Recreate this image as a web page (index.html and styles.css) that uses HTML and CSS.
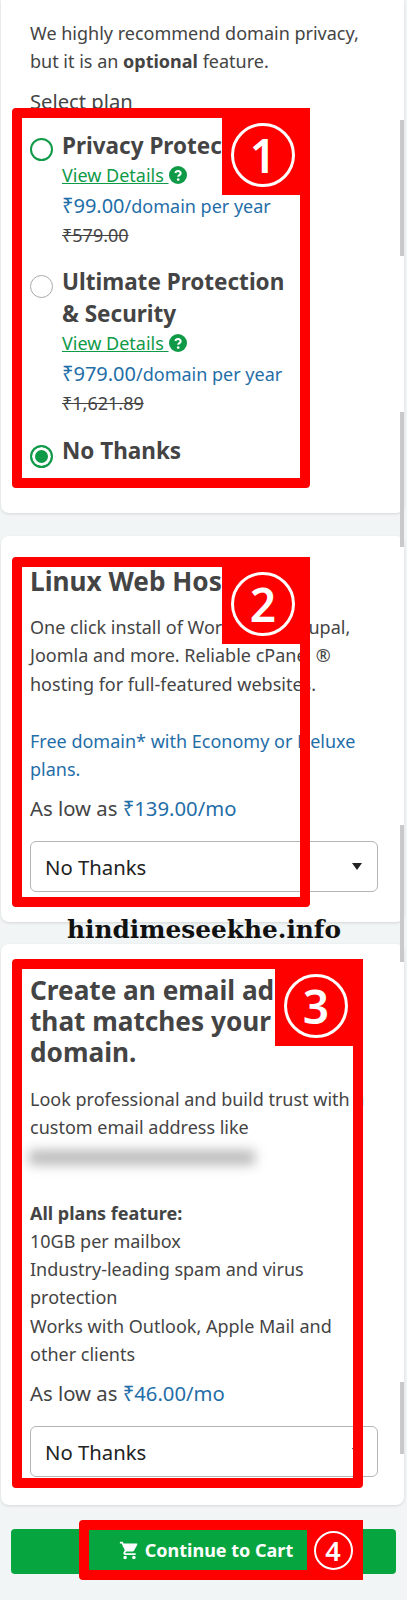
FILE: index.html
```html
<!DOCTYPE html>
<html lang="en">
<head>
    <meta charset="UTF-8">
    <meta name="viewport" content="width=device-width, initial-scale=1.0">
    <title>Domain add-ons</title>
    <link rel="stylesheet" href="styles.css">
</head>
<body>
    <div class="page">
        <section class="card card-privacy">
            <p class="intro">We highly recommend domain privacy, but it is an <strong>optional</strong> feature.</p>
            <div class="select-label">Select plan</div>

            <div class="plan plan-first">
                <span class="radio radio-ring"></span>
                <div class="plan-body">
                    <div class="plan-name">Privacy Protection</div>
                    <div class="plan-link"><a href="#">View Details </a><svg class="help" viewBox="0 0 18 18"><circle cx="9" cy="9" r="9" fill="#0f9a48"/><path d="M6.4 7a2.7 2.7 0 0 1 5.3.3c0 1.8-2.5 1.9-2.5 3.4" fill="none" stroke="#fff" stroke-width="2"/><circle cx="9.2" cy="13.6" r="1.3" fill="#fff"/></svg></div>
                    <div class="plan-price"><span class="amount">₹99.00</span>/domain per year</div>
                    <div class="plan-old">₹579.00</div>
                </div>
            </div>

            <div class="plan plan-second">
                <span class="radio"></span>
                <div class="plan-body">
                    <div class="plan-name">Ultimate Protection &amp; Security</div>
                    <div class="plan-link"><a href="#">View Details </a><svg class="help" viewBox="0 0 18 18"><circle cx="9" cy="9" r="9" fill="#0f9a48"/><path d="M6.4 7a2.7 2.7 0 0 1 5.3.3c0 1.8-2.5 1.9-2.5 3.4" fill="none" stroke="#fff" stroke-width="2"/><circle cx="9.2" cy="13.6" r="1.3" fill="#fff"/></svg></div>
                    <div class="plan-price"><span class="amount">₹979.00</span>/domain per year</div>
                    <div class="plan-old">₹1,621.89</div>
                </div>
            </div>

            <div class="plan plan-third">
                <span class="radio radio-on"></span>
                <div class="plan-body">
                    <div class="plan-name">No Thanks</div>
                </div>
            </div>
        </section>

        <section class="card card-hosting">
            <h2>Linux Web Hosting</h2>
            <p class="copy">One click install of WordPress, Drupal, Joomla and more. Reliable cPanel ® hosting for full-featured websites.</p>
            <p class="copy promo">Free domain* with Economy or Deluxe plans.</p>
            <p class="as-low">As low as <span class="blue">₹139.00/mo</span></p>
            <div class="dropdown">No Thanks<span class="caret"></span></div>
        </section>

        <section class="card card-email">
            <h2>Create an email address that matches your domain.</h2>
            <p class="copy">Look professional and build trust with a custom email address like</p>
            <div class="blurred"></div>
            <p class="copy features"><strong>All plans feature:</strong><br>10GB per mailbox<br>Industry-leading spam and virus protection<br>Works with Outlook, Apple Mail and other clients</p>
            <p class="as-low">As low as <span class="blue">₹46.00/mo</span></p>
            <div class="dropdown">No Thanks<span class="caret"></span></div>
        </section>

        <div class="footer">
            <button class="continue" type="button">
                <svg class="cart" viewBox="0 0 24 24"><path fill="#fff" d="M7 18c-1.1 0-1.99.9-1.99 2S5.900 22 7 22s2-.9 2-2-.9-2-2-2zM1 2v2h2l3.600 7.590-1.350 2.450c-.16.28-.25.61-.25.960 0 1.100.9 2 2 2h12v-2H7.420c-.14 0-.25-.11-.25-.25l.03-.12.9-1.630h7.450c.75 0 1.410-.41 1.750-1.030l3.580-6.490A1 1 0 0 0 20 4H5.210l-.94-2H1zm16 16c-1.100 0-1.990.9-1.990 2s.89 2 1.990 2 2-.9 2-2-.9-2-2-2z"/></svg>
                Continue to Cart
            </button>
        </div>

        <!-- annotations drawn over the screenshot -->
        <div class="scroll-bit bit-a"></div>
        <div class="scroll-bit bit-b"></div>
        <div class="scroll-bit bit-c"></div>
        <div class="scroll-bit bit-d"></div>

        <div class="mark mark-1"><span class="tag"><span class="num">1</span></span></div>
        <div class="mark mark-2"><span class="tag"><span class="num">2</span></span></div>
        <div class="mark mark-3"><span class="tag"><span class="num">3</span></span></div>
        <div class="mark mark-4"><span class="tag tag-small"><span class="num num-small">4</span></span></div>
        <div class="watermark">hindimeseekhe.info</div>
    </div>
</body>
</html>
```

FILE: styles.css
```css
body {
    font-family: "Noto Sans", "Open Sans", sans-serif;
    background-color: #f1f5f6;
    color: #444444;
    margin: 0;
    padding: 0;
}

.page {
    position: relative;
    width: 407px;
    height: 1600px;
    overflow: hidden;
}

.card {
    background-color: #ffffff;
    box-shadow: 0 1px 3px rgba(0, 0, 0, 0.12);
    border-radius: 8px;
    margin-right: 3px;
    margin-left: 1px;
    padding: 0 29px;
    box-sizing: border-box;
}

.card-privacy {
    height: 513px;
    padding-top: 19px;
    border-radius: 0 0 8px 8px;
}

.card-hosting {
    height: 386px;
    margin-top: 23px;
    padding-top: 30px;
}

.card-email {
    height: 561px;
    margin-top: 22px;
    padding-top: 31px;
}

p {
    margin: 0;
}

.intro, .copy {
    font-size: 18px;
    line-height: 28.3px;
}

.select-label {
    font-size: 20.2px;
    line-height: 28px;
    margin-top: 11px;
}

.plan {
    display: flex;
    gap: 9px;
}

.plan-first {
    margin-top: 15px;
}

.plan-second {
    margin-top: 17px;
}

.plan-third {
    margin-top: 18px;
}

.radio {
    flex: none;
    width: 23px;
    height: 23px;
    margin-top: 9px;
    border: 1px solid #aaaaaa;
    border-radius: 50%;
    box-sizing: border-box;
    background-color: #ffffff;
}

.radio-ring {
    margin-top: 8px;
    border: 2.5px solid #0f9a48;
}

.radio-on {
    margin-top: 10px;
    border: 2.5px solid #0f9a48;
    background-color: #0f9a48;
    box-shadow: inset 0 0 0 3px #ffffff;
}

.plan-body {
    width: 240px;
}

.plan-name {
    font-size: 22.5px;
    line-height: 32px;
    font-weight: bold;
}

.plan-link {
    display: flex;
    align-items: center;
    font-size: 18px;
    line-height: 27px;
}

.plan-link a {
    color: #0f9a48;
    white-space: pre;
}

.help {
    width: 18px;
    height: 18px;
}

.plan-price {
    font-size: 18px;
    line-height: 30px;
    margin-top: 2px;
    color: #1f6ea8;
}

.amount {
    font-size: 20px;
}

.plan-old {
    font-size: 18px;
    line-height: 28px;
    text-decoration: line-through;
}

h2 {
    font-size: 26.2px;
    line-height: 31px;
    font-weight: bold;
    margin: 0 0 16px 0;
}

.card-email h2 {
    margin-bottom: 17px;
}

.promo {
    color: #1f6ea8;
    margin-top: 29px;
}

.as-low {
    font-size: 20.3px;
    line-height: 28px;
    margin-top: 11px;
}

.blue {
    color: #1f6ea8;
}

.dropdown {
    display: flex;
    align-items: center;
    justify-content: space-between;
    box-sizing: border-box;
    height: 51px;
    margin-top: 19px;
    margin-right: -3px;
    padding: 0 15px 0 14px;
    border: 1px solid #b5b5b5;
    border-radius: 6px;
    font-size: 20.3px;
    color: #222222;
}

.caret {
    width: 0;
    height: 0;
    border-left: 5px solid transparent;
    border-right: 5px solid transparent;
    border-top: 7px solid #222222;
}

.blurred {
    width: 226px;
    height: 15px;
    margin: 8px 0 0 -1px;
    background-color: #bbbbbb;
    filter: blur(6px);
}

.features {
    margin-top: 34px;
}

.footer {
    padding: 24px 11px 0 11px;
}

.continue {
    display: flex;
    align-items: center;
    justify-content: center;
    gap: 5px;
    width: 100%;
    height: 45px;
    background-color: #07a53f;
    color: white;
    border: none;
    border-radius: 4px;
    font-family: inherit;
    font-size: 18px;
    font-weight: bold;
    padding: 0 0 3px 5px;
}

.cart {
    width: 21px;
    height: 21px;
}

.scroll-bit {
    position: absolute;
    left: 400px;
    width: 4px;
    background-color: #c9c9c9;
}

.bit-a { top: 120px; height: 136px; }
.bit-b { top: 412px; height: 135px; }
.bit-c { top: 825px; height: 137px; }
.bit-d { top: 1382px; height: 72px; }

.mark {
    position: absolute;
    box-sizing: border-box;
    border: 10px solid #fe0000;
    border-radius: 4px;
}

.mark-1 { left: 12px; top: 108px; width: 298px; height: 380px; }
.mark-2 { left: 12px; top: 557px; width: 298px; height: 350px; }
.mark-3 { left: 12px; top: 959px; width: 351px; height: 529px; }
.mark-4 { left: 79px; top: 1520px; width: 284px; height: 60px; border-right-width: 56px; }

.tag {
    position: absolute;
    top: -10px;
    right: -10px;
    width: 88px;
    height: 87px;
    display: flex;
    align-items: center;
    justify-content: center;
    background-color: #fe0000;
}

.num {
    display: flex;
    align-items: center;
    justify-content: center;
    box-sizing: border-box;
    width: 64px;
    height: 64px;
    margin: 6px 6px 0 0;
    border: 3px solid #ffffff;
    border-radius: 50%;
    color: #ffffff;
    font-size: 46px;
    font-weight: 600;
    line-height: 1;
}

.tag-small {
    top: -10px;
    right: -56px;
    width: 56px;
    height: 60px;
}

.num-small {
    width: 39px;
    height: 39px;
    margin: 0 4px 0 0;
    border-width: 2px;
    font-size: 27px;
}

.watermark {
    position: absolute;
    left: 67px;
    top: 914px;
    font-family: "DejaVu Serif", serif;
    font-weight: bold;
    font-size: 24.8px;
    line-height: 32px;
    color: #111111;
}
```
